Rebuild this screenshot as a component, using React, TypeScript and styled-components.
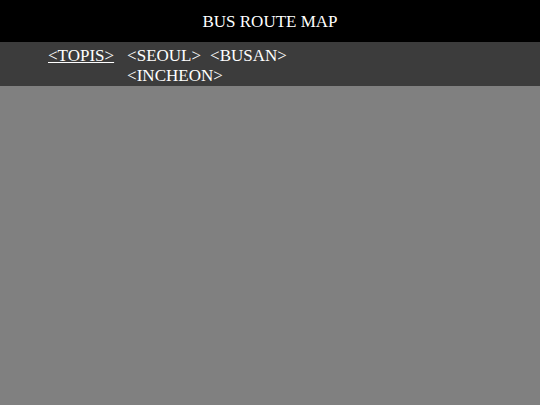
import React from "react";
import { createGlobalStyle, styled } from "styled-components";

const GlobalStyle = createGlobalStyle`
  html, body {
    margin: 0;
    padding: 0;
    height: 100%;
    background: #808080;
  }
  body {
    font-family: "Liberation Serif", "Times New Roman", serif;
  }
`;

const Page = styled.div`
  display: flex;
  flex-direction: column;
  min-height: 405px;
  background: #808080;
`;

const Header = styled.header`
  height: 42px;
  box-sizing: border-box;
  padding-top: 2px;
  background: #000;
  color: #fff;
  display: flex;
  align-items: center;
  justify-content: center;
  font-size: 17px;
`;

const Nav = styled.nav`
  background: #3c3c3c;
  padding: 4px 0 0 48px;
  display: flex;
  align-items: flex-start;
  font-size: 17px;
  line-height: 20px;
`;

const NavLink = styled.a<{ $active?: boolean }>`
  color: #fff;
  text-decoration: ${(p) => (p.$active ? "underline" : "none")};
  cursor: pointer;
  white-space: nowrap;
`;

const Primary = styled.div`
  margin-right: 13px;
`;

const CityGroup = styled.div`
  display: flex;
  flex-wrap: wrap;
  column-gap: 9px;
  width: 200px;
`;

const MapArea = styled.main`
  flex: 1;
  background: #808080;
`;

const cities = ["SEOUL", "BUSAN", "INCHEON"];

export default function App() {
  return (
    <>
      <GlobalStyle />
      <Page>
        <Header>BUS ROUTE MAP</Header>
        <Nav>
          <Primary>
            <NavLink $active>{"<TOPIS>"}</NavLink>
          </Primary>
          <CityGroup>
            {cities.map((c) => (
              <NavLink key={c}>{`<${c}>`}</NavLink>
            ))}
          </CityGroup>
        </Nav>
        <MapArea />
      </Page>
    </>
  );
}
